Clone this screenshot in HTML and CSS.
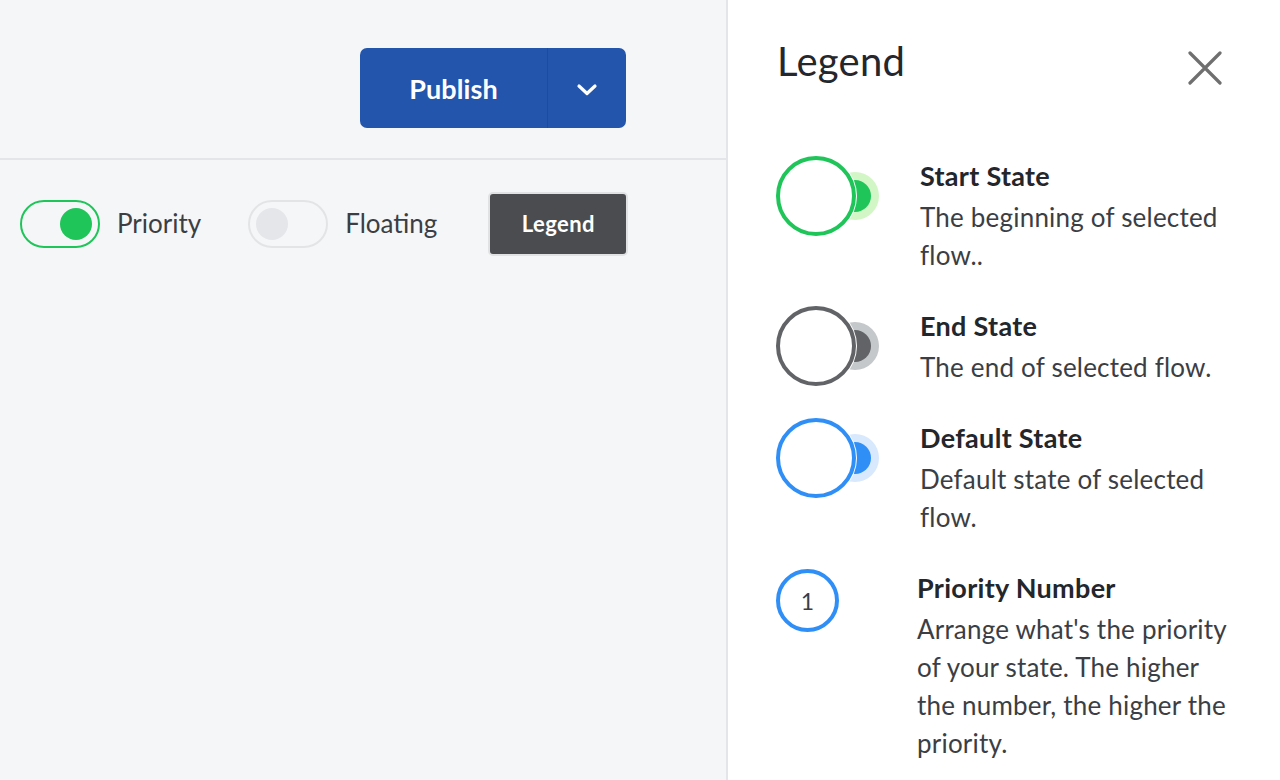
FILE: index.html
```html
<!DOCTYPE html>
<html lang="en">
<head>
<meta charset="utf-8">
<title>Legend</title>
<link rel="stylesheet" href="styles.css">
</head>
<body>
<div class="app">
  <main class="canvas">
    <header class="topbar">
      <div class="publish">
        <button class="publish-main">Publish</button>
        <button class="publish-more" aria-label="More">
          <svg width="22" height="14" viewBox="0 0 22 14"><path d="M3 3 L11 10.5 L19 3" fill="none" stroke="#fff" stroke-width="3.2" stroke-linecap="round" stroke-linejoin="round"/></svg>
        </button>
      </div>
    </header>
    <div class="toolbar">
      <label class="switch-item">
        <span class="switch on"><span class="knob"></span></span>
        <span class="switch-label">Priority</span>
      </label>
      <label class="switch-item">
        <span class="switch"><span class="knob"></span></span>
        <span class="switch-label">Floating</span>
      </label>
      <button class="legend-btn">Legend</button>
    </div>
  </main>
  <aside class="panel">
    <div class="panel-head">
      <h1 class="panel-title">Legend</h1>
      <button class="close" aria-label="Close">
        <svg width="34" height="34" viewBox="0 0 34 34"><path d="M2 2 L32 32 M32 2 L2 32" stroke="#6f6f6f" stroke-width="3.2" stroke-linecap="round"/></svg>
      </button>
    </div>
    <ul class="legend-list">
      <li class="legend-item">
        <div class="state-icon start"><span class="halo"></span><span class="ring"></span></div>
        <div class="legend-text">
          <h2>Start State</h2>
          <p>The beginning of selected flow..</p>
        </div>
      </li>
      <li class="legend-item">
        <div class="state-icon end"><span class="halo"></span><span class="ring"></span></div>
        <div class="legend-text">
          <h2>End State</h2>
          <p>The end of selected flow.</p>
        </div>
      </li>
      <li class="legend-item">
        <div class="state-icon default"><span class="halo"></span><span class="ring"></span></div>
        <div class="legend-text">
          <h2>Default State</h2>
          <p>Default state of selected flow.</p>
        </div>
      </li>
      <li class="legend-item priority">
        <div class="num-icon">1</div>
        <div class="legend-text">
          <h2>Priority Number</h2>
          <p>Arrange what's the priority of your state. The higher the number, the higher the priority.</p>
        </div>
      </li>
    </ul>
  </aside>
</div>
</body>
</html>
```

FILE: styles.css
```css
* { box-sizing: border-box; }
html, body { margin: 0; padding: 0; }
body {
  font-family: Lato, "Noto Sans", sans-serif;
  color: #3b3e43;
  background: #f5f6f8;
}
button { font-family: inherit; cursor: pointer; }

.app {
  display: flex;
  width: 1280px;
  height: 780px;
  overflow: hidden;
}

.canvas {
  width: 728px;
  flex: none;
  background: #f5f6f8;
  border-right: 2px solid #e3e5e8;
}

.topbar {
  height: 160px;
  border-bottom: 2px solid #e3e5e8;
  display: flex;
  justify-content: flex-end;
  align-items: flex-start;
  padding: 48px 100px 0 0;
}

.publish {
  display: flex;
  height: 80px;
  border-radius: 7px;
  overflow: hidden;
  background: #2355ad;
}
.publish-main {
  width: 188px;
  border: none;
  border-right: 1px solid #1d4c9c;
  background: transparent;
  color: #fff;
  font-size: 27px;
  font-weight: 700;
  letter-spacing: 0.1px;
  padding: 0;
}
.publish-more {
  width: 78px;
  border: none;
  background: transparent;
  display: flex;
  align-items: center;
  justify-content: center;
  padding: 4px 0 0 0;
}

.toolbar {
  display: flex;
  align-items: center;
  padding: 0 0 0 20px;
  height: 130px;
  margin-top: -1px;
}
.switch-item {
  display: flex;
  align-items: center;
  gap: 17px;
  margin-right: 47px;
}
.switch-item + .switch-item { margin-right: 51px; }
.switch {
  width: 80px;
  height: 48px;
  border-radius: 24px;
  border: 2px solid #e3e4e6;
  display: flex;
  align-items: center;
  padding: 0 6px;
}
.switch .knob {
  width: 32px;
  height: 32px;
  border-radius: 50%;
  background: #e4e6e9;
}
.switch.on {
  border-color: #20c55a;
  justify-content: flex-end;
}
.switch.on .knob { background: #20c55a; }
.switch-label {
  font-size: 26px;
  color: #3b3e43;
  margin-top: -2px;
}
.legend-btn {
  width: 140px;
  height: 64px;
  background: #4a4c4f;
  border: 2px solid #e1e2e4;
  border-radius: 5px;
  color: #fff;
  font-size: 22px;
  font-weight: 700;
  letter-spacing: 0.4px;
  padding: 0 0 2px 0;
}

.panel {
  flex: 1;
  background: #fff;
  padding: 0 50px 0 48px;
}
.panel-head {
  display: flex;
  justify-content: space-between;
  align-items: flex-start;
  height: 156px;
  padding-top: 36px;
}
.panel-title {
  margin: 0 0 0 1px;
  font-size: 40px;
  font-weight: 400;
  letter-spacing: 0.3px;
  color: #24272c;
  line-height: 50px;
}
.close {
  border: none;
  background: transparent;
  padding: 0;
  margin: 15px 8px 0 0;
  display: flex;
}

.legend-list {
  list-style: none;
  margin: 0;
  padding: 0;
  display: flex;
  flex-direction: column;
  gap: 32px;
}
.legend-item {
  display: flex;
  align-items: flex-start;
}
.state-icon {
  position: relative;
  width: 144px;
  height: 80px;
  flex: none;
}
.state-icon .ring {
  position: absolute;
  left: 0;
  top: 0;
  width: 80px;
  height: 80px;
  border-radius: 50%;
  background: #fff;
  border: 4px solid;
  box-shadow: 0 0 0 1px #fff;
}
.state-icon .halo {
  position: absolute;
  left: 55px;
  top: 16px;
  width: 48px;
  height: 48px;
  border-radius: 50%;
}
.state-icon .halo::after {
  content: "";
  position: absolute;
  left: 8px;
  top: 8px;
  width: 32px;
  height: 32px;
  border-radius: 50%;
  background: currentColor;
}
.start .ring { border-color: #20c55a; }
.start .halo { background: #d3f6c7; color: #20c55a; }
.end .ring { border-color: #616366; }
.end .halo { background: #c5c8ca; color: #616366; }
.default .ring { border-color: #2f8ff7; }
.default .halo { background: #d8e8fd; color: #2f8ff7; }

.num-icon {
  width: 63px;
  height: 63px;
  margin-top: 1px;
  margin-right: 78px;
  flex: none;
  border-radius: 50%;
  border: 4px solid #2f8ff7;
  display: flex;
  align-items: center;
  justify-content: center;
  font-size: 23px;
  color: #3b3e43;
}

.legend-text { flex: 1; }
.legend-text h2 {
  margin: 0 0 2px 0;
  font-size: 27px;
  line-height: 40px;
  font-weight: 700;
  letter-spacing: 0.3px;
  color: #23262b;
}
.legend-text p {
  margin: 0;
  font-size: 26px;
  line-height: 38px;
  letter-spacing: 0.2px;
  color: #3b3e43;
}
```
